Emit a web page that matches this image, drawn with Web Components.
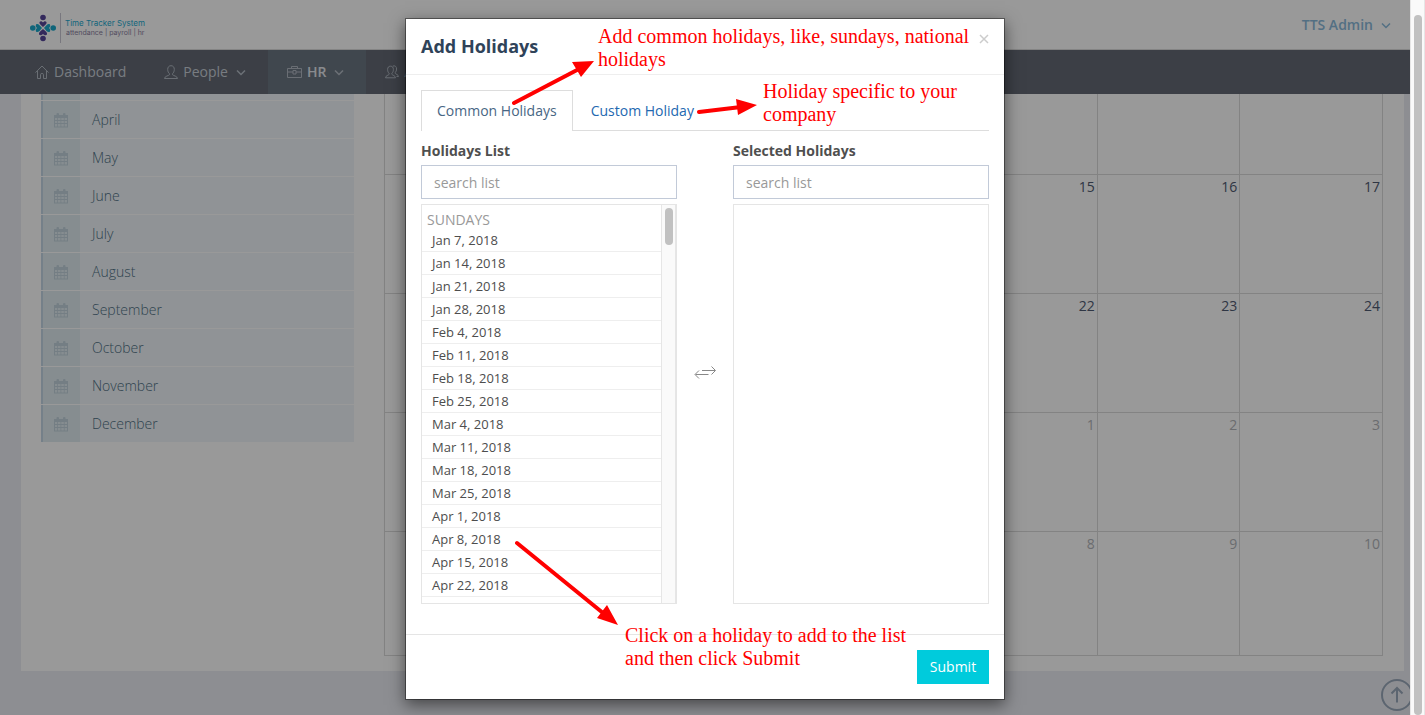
<!DOCTYPE html>
<html lang="en">
<head>
<meta charset="utf-8">
<meta name="viewport" content="width=device-width, initial-scale=1">
<title>Time Tracker System - Holidays</title>
<style>
  html, body { margin: 0; height: 100%; }
  body { font: 14px/20px "Open Sans", sans-serif; color: #333; overflow: hidden; }
</style>
</head>
<body>
<app-shell>
  <top-bar slot="header" user="TTS Admin"></top-bar>
  <nav-bar slot="header">
    <nav-item icon="home">Dashboard</nav-item>
    <nav-item icon="user" menu>People</nav-item>
    <nav-item icon="case" menu active>HR</nav-item>
    <nav-item icon="users">A</nav-item>
  </nav-bar>
  <month-list></month-list>
  <event-calendar></event-calendar>
  <holiday-dialog slot="dialog">
    <holiday-picker slot="left" label="Holidays List" group="SUNDAYS"
      items="Jan 7, 2018|Jan 14, 2018|Jan 21, 2018|Jan 28, 2018|Feb 4, 2018|Feb 11, 2018|Feb 18, 2018|Feb 25, 2018|Mar 4, 2018|Mar 11, 2018|Mar 18, 2018|Mar 25, 2018|Apr 1, 2018|Apr 8, 2018|Apr 15, 2018|Apr 22, 2018"></holiday-picker>
    <holiday-picker slot="right" label="Selected Holidays"></holiday-picker>
  </holiday-dialog>
</app-shell>

<script>
const define = (name, render) => customElements.define(name, class extends HTMLElement {
  connectedCallback() {
    if (this.shadowRoot) return;
    this.attachShadow({ mode: 'open' }).innerHTML = render(this);
  }
});

const ICONS = {
  home: ['0 0 14 14', '<path d="M.5 7.6 7 1l6.500 6.600M2.500 6v7.500h3V9.500q0-1 1.500-1t1.500 1v4h3V6"/>'],
  user: ['0 0 14 14', '<path d="M7 .7c-2.100 0-3.300 1.500-3.300 3.700 0 1.900.7 3.400 1.700 4.200v1.200C4.800 10.800.7 10.900.5 13.500h13c-.2-2.600-4.300-2.700-4.900-3.700V8.600c1-.8 1.700-2.300 1.700-4.200C10.300 2.200 9.100.7 7 .7z"/>'],
  users: ['0 0 14 14', '<path d="M5.500 1.200C3.600 1.200 2.600 2.500 2.600 4.500c0 1.700.6 3 1.500 3.800v1C3.600 10.300.6 10.500.5 12.800h10c-.1-2.300-3.100-2.500-3.600-3.500v-1c.9-.8 1.500-2.100 1.500-3.800 0-2-1-3.300-2.900-3.300zM7.800 1.100c2.300-.9 3.800.6 3.800 2.900 0 1.500-.5 2.700-1.300 3.400v1c.5.9 3.100 1.100 3.200 3.100h-2"/>'],
  case: ['0 0 15 14', '<path d="M.5 3.500h14v9H.5zM4.500 3.500v-2h6v2M.5 7h5.500M9 7h5.500M6 5.500h3v3.500H6z"/>'],
  chevron: ['0 0 10 10', '<path stroke-width="1.500" d="M1 3.500 5 7.500l4-4"/>'],
  calendar: ['0 0 15 16', '<g fill="currentColor" stroke="none"><path fill-rule="evenodd" d="M0 3h14v12.500H0zM1 6v2h2.200V6zm3 0v2h2.500V6zm3.300 0v2h2.500V6zm3.300 0v2H13V6zM1 9v2h2.200V9zm3 0v2h2.500V9zm3.300 0v2h2.500V9zm3.300 0v2H13V9zM1 12v2.500h2.200V12zm3 0v2.500h2.500V12zm3.300 0v2.500h2.500V12zm3.300 0v2.500H13V12z"/><rect x="2.500" y="1" width="2.500" height="4" rx="1"/><rect x="9" y="1" width="2.500" height="4" rx="1"/></g>'],
  swap: ['0 0 22 14', '<path d="M8 4.500h13M17.500 .5l4 4-4 4M14.500 8.500H1.500M5 4.500l-4 4 4 4"/>'],
  close: ['0 0 10 10', '<path stroke-width="1.500" d="m1 1 8 8M9 1 1 9"/>'],
  top: ['0 0 32 32', '<g stroke-width="2"><circle cx="16" cy="16" r="15"/><path d="M16 23.500V9M10.500 14.500 16 9l5.500 5.500"/></g>']
};

define('ui-icon', el => {
  const [box, art] = ICONS[el.getAttribute('name')];
  const [, , w, h] = box.split(' ');
  return `<style>:host{display:inline-flex;flex:none}svg{display:block;fill:none;stroke:currentColor;stroke-width:1}</style>
  <svg width="${w}" height="${h}" viewBox="${box}" aria-hidden="true">${art}</svg>`;
});

define('app-shell', () => `<style>
  :host { display: flex; height: 100vh; }
  .view { flex: 1; min-width: 0; position: relative; overflow: hidden; display: flex; flex-direction: column; background: #ecedf3; }
  .backdrop { position: absolute; inset: 0; background: rgba(0,0,0,.4); }
  main { padding: 0 6px 0 21px; }
  .card { display: flex; align-items: flex-start; gap: 30px; padding: 0 21px 15px 20px; background: #fff; }
  ::slotted(event-calendar) { flex: 1; }
  .to-top { position: absolute; right: -3px; bottom: -1px; color: #9aa9bb; }
  ::slotted([slot=dialog]) { position: absolute; top: 18px; left: 0; right: 0; margin: 0 auto; }
</style>
<div class="view">
  <header><slot name="header"></slot></header>
  <main><div class="card"><slot></slot></div></main>
  <a class="to-top" href="#" aria-label="Scroll to top"><ui-icon name="top"></ui-icon></a>
  <div class="backdrop"></div>
  <slot name="dialog"></slot>
</div>
<scroll-rail style="--start:15px;--size:100%"></scroll-rail>`);

define('scroll-rail', () => `<style>
  :host { display: block; box-sizing: border-box; width: 15px; flex: none; padding: var(--start) 3px 0; overflow: hidden;
    background: #fafafa; border-left: 1px solid #e6e6e6; border-right: 1px solid #e6e6e6; }
  div { height: var(--size); width: 8px; margin: 0 auto; border-radius: 4px; background: #c1c1c1; }
</style><div></div>`);

define('brand-logo', () => `<style>
  :host { display: flex; align-items: center; gap: 3px; }
  svg { display: block; }
  .words { display: flex; flex-direction: column; font: 8px/9px Inter, sans-serif; color: #23a9cf; white-space: nowrap; }
  .sub { font-size: 7px; color: #8a80a0; padding-left: 1px; }
</style>
<svg width="32" height="30" viewBox="0 0 32 30" aria-hidden="true">
  <g fill="#55459a"><circle cx="13" cy="4.500" r="2.800"/><circle cx="13" cy="25.500" r="2.800"/>
    <path d="M13 14c-2.500-2-4-3.500-3.500-5 1.500-1.500 2.500-.5 3.500.5 1-1 2-2 3.500-.5.500 1.500-1 3-3.500 5zM13 16c-2.500 2-4.500 3.500-4 5.500 1.500 1.500 3 .5 4-.5 1 1 2.500 2 4 .5.500-2-1.500-3.500-4-5.500z"/></g>
  <g fill="#1aa8cb"><circle cx="2.800" cy="15" r="2.800"/><circle cx="23.200" cy="15" r="2.800"/>
    <path d="M12 15c-2-2.500-3.500-4.500-5.500-4-1.500 1.500-.5 3 .5 4-1 1-2 2.500-.5 4 2 .5 3.500-1.500 5.500-4zM14 15c2-2.500 3.500-4.500 5.500-4 1.500 1.500.5 3-.5 4 1 1 2 2.500.5 4-2 .5-3.500-1.500-5.500-4z"/></g>
  <path stroke="#c8c6d2" d="M30.500 0v30"/>
</svg>
<div class="words"><span>Time Tracker System</span><span class="sub">attendance | payroll | hr</span></div>`);

define('top-bar', el => `<style>
  :host { display: flex; align-items: center; justify-content: space-between; box-sizing: border-box; height: 50px;
    padding: 0 19px 0 30px; background: #fff; border-bottom: 1px solid #ddd; }
  brand-logo { padding-top: 7px; }
  a { display: flex; align-items: center; gap: 8px; color: #8bbadb; font-weight: 600; text-decoration: none; }
</style>
<brand-logo></brand-logo>
<a href="#">${el.getAttribute('user')}<ui-icon name="chevron"></ui-icon></a>`);

define('nav-bar', () => `<style>
  :host { display: flex; height: 44px; padding: 0 16px; background: #646a75; }
</style><slot></slot>`);

define('nav-item', el => `<style>
  :host { display: block; }
  :host([active]) { background: #6c7783; }
  a { display: flex; align-items: center; height: 44px; padding: 0 19px; color: #c9cfd8; font-weight: 500; text-decoration: none; white-space: nowrap; }
  .lead { margin-right: 5px; color: #b1b8c2; }
  .more { margin: 0 3px 0 8px; color: #b4bbc5; }
  :host([active]) a { color: #e4e8ee; font-weight: 600; }
</style>
<a href="#"><ui-icon class="lead" name="${el.getAttribute('icon')}"></ui-icon><slot></slot>${el.hasAttribute('menu') ? '<ui-icon class="more" name="chevron"></ui-icon>' : ''}</a>`);

define('month-list', () => `<style>
  :host { display: block; flex: 0 0 313px; }
  ul { list-style: none; margin: 0; padding: 0; display: grid; gap: 1px; }
  .cut { height: 6px; display: grid; grid-template-columns: 37px 1fr; border-left: 2px solid #c4d5e4; background: linear-gradient(#e0ebf1, #e0ebf1) 0 0 / 37px 100% no-repeat #f0f6fa; }
  a { display: flex; height: 37px; align-items: stretch; border-left: 2px solid #c4d5e4; background: #f0f6fa; color: #4f6f84; font-weight: 300; text-decoration: none; }
  .icon { display: flex; width: 37px; align-items: center; justify-content: center; background: #e0ebf1; color: #c2d3dc; }
  .name { padding: 9px 12px; line-height: 20px; }
</style>
<ul><li class="cut"></li>${['April','May','June','July','August','September','October','November','December'].map(m =>
  `<li><a href="#"><span class="icon"><ui-icon name="calendar"></ui-icon></span><span class="name">${m}</span></a></li>`).join('')}</ul>`);

define('event-calendar', () => {
  const weeks = [['', '', ''], ['15', '16', '17'], ['22', '23', '24'], ['1', '2', '3'], ['8', '9', '10']];
  return `<style>
  :host { display: block; min-width: 0; }
  table { width: 100%; border-collapse: collapse; table-layout: fixed; }
  tr { height: 119px; }
  tr:first-child { height: 80px; }
  tr:last-child { height: 124px; }
  td { box-sizing: border-box; padding: 2px 2px 0; border: 1px solid #dadada; text-align: right; vertical-align: top; color: #4f5a72; }
  tr:first-child td { border-top: 0; }
  .other { color: #b2b5ba; }
</style>
<table aria-label="Calendar"><tbody>${weeks.map((w, i) =>
  `<tr><td></td><td></td><td></td><td></td>${w.map(d => `<td${i > 2 ? ' class="other"' : ''}>${d}</td>`).join('')}</tr>`).join('')}</tbody></table>`;
});

define('holiday-picker', el => {
  const items = (el.getAttribute('items') || '').split('|').filter(Boolean);
  return `<style>
  :host { display: flex; flex-direction: column; width: 256px; }
  label { margin-bottom: 4px; font-weight: 700; color: #4f4f4f; }
  input { box-sizing: border-box; width: 100%; height: 34px; margin: 0 0 5px; padding: 6px 12px; border: 1px solid #c2cad8; border-radius: 0; background: #fff; font: inherit; color: #555; }
  input::placeholder { color: #999; opacity: 1; }
  .list { display: flex; box-sizing: border-box; height: 400px; border: 1px solid #e5e5e5; overflow: hidden; }
  ul { flex: 1; list-style: none; margin: 0; padding: 0; }
  .group { padding: 5px 5px 0; line-height: 19px; color: #999; }
  button { display: block; box-sizing: border-box; width: 100%; height: 23px; padding: 0 10px; border: 0; border-bottom: 1px solid #eee; background: none; text-align: left; font: 13px/22px "Open Sans", sans-serif; color: #4d4d4d; }
</style>
<label for="q">${el.getAttribute('label')}</label>
<input id="q" type="text" placeholder="search list">
<div class="list">${items.length ? `<ul><li class="group">${el.getAttribute('group')}</li>${items.map(t => `<li><button type="button">${t}</button></li>`).join('')}</ul><scroll-rail style="--start:3px;--size:37px"></scroll-rail>` : ''}</div>`;
});

define('callout-note', () => `<style>
  :host { position: absolute; font: 20px/23px "Liberation Serif", serif; color: #f00; }
</style><slot></slot>`);

define('holiday-dialog', () => `<style>
  :host { display: block; box-sizing: border-box; width: 600px; max-width: 100%; background: #fff; background-clip: padding-box;
    border: 1px solid rgba(0,0,0,.4); box-shadow: 0 5px 15px rgba(0,0,0,.5); }
  header { display: flex; justify-content: space-between; padding: 15px; border-bottom: 1px solid #eee; }
  h4 { margin: 0; font-size: 18px; line-height: 25px; font-weight: 700; color: #2f4359; }
  .close { display: flex; height: 10px; margin: 0; padding: 0; border: 0; background: none; color: #ccc; }
  section { padding: 15px 15px 30px; }
  nav { display: flex; border-bottom: 1px solid #ddd; }
  nav a { height: 40px; box-sizing: border-box; padding: 10px 16px; border: 1px solid transparent; border-bottom: 0; color: #2368b0; text-decoration: none; line-height: 20px; }
  nav a.on { height: 41px; margin: 0 1px -1px 0; padding: 10px 15px; border-color: #ddd; background: #fff; color: #486684; }
  .pickers { display: flex; justify-content: space-between; align-items: center; padding-top: 10px; color: #888; }
  footer { display: flex; justify-content: flex-end; padding: 15px; border-top: 1px solid #e5e5e5; }
  .submit { width: 72px; height: 34px; padding: 0; border: 0; background: #00cbdc; color: #fff; font: 500 14px/20px "Open Sans", sans-serif; }
  .arrows { position: absolute; top: 0; left: 0; pointer-events: none; }
  .n1 { left: 192px; top: 6px; }
  .n2 { left: 357px; top: 61px; }
  .n3 { left: 219px; top: 605px; }
</style>
<header><h4>Add Holidays</h4><button class="close" type="button" aria-label="Close"><ui-icon name="close"></ui-icon></button></header>
<section>
  <nav><a class="on" href="#">Common Holidays</a><a href="#">Custom Holiday</a></nav>
  <div class="pickers"><slot name="left"></slot><ui-icon name="swap"></ui-icon><slot name="right"></slot></div>
</section>
<footer><button class="submit" type="button">Submit</button></footer>
<svg class="arrows" width="598" height="680" viewBox="406 19 598 680" aria-hidden="true">
  <g stroke="#f00" stroke-width="4" stroke-linecap="round"><path d="M514 103 578 69.500M699 112l42-5M517 543l86 70"/></g>
  <g fill="#f00"><path d="M594 61 572 62 581 77zM757 105 736 99 738 115zM618 625 607 605 597 618z"/></g>
</svg>
<callout-note class="n1">Add common holidays, like, sundays, national<br>holidays</callout-note>
<callout-note class="n2">Holiday specific to your<br>company</callout-note>
<callout-note class="n3">Click on a holiday to add to the list<br>and then click Submit</callout-note>`);
</script>
</body>
</html>
